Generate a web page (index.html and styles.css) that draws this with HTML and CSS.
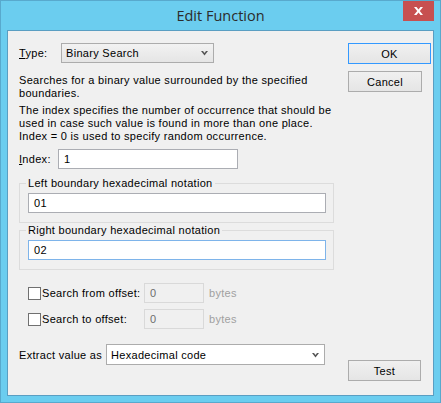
FILE: index.html
```html
<!DOCTYPE html>
<html>
<head>
<meta charset="utf-8">
<link rel="stylesheet" href="styles.css">
</head>
<body>
<div class="window">
  <div class="titlebar">
    <span class="title">Edit Function</span>
    <div class="close">
      <svg width="9" height="8" viewBox="0 0 9 8"><path d="M0 0H2.5L4.5 2.4L6.5 0H9L5.8 4L9 8H6.5L4.5 5.6L2.5 8H0L3.2 4Z" fill="#fff"/></svg>
    </div>
  </div>
  <div class="client">
    <div class="main">
      <div class="row type-row">
        <span class="lbl lbl-type"><u>T</u>ype:</span>
        <div class="select select-btn">
          <span>Binary Search</span>
          <svg class="arrow" width="7" height="5" viewBox="0 0 7 5"><path d="M0 0H2L3.5 2L5 0H7L3.5 4.5Z" fill="#555"/></svg>
        </div>
      </div>
      <p class="desc desc1">Searches for a binary value surrounded by the specified<br>boundaries.</p>
      <p class="desc desc2">The index specifies the number of occurrence that should be<br>used in case such value is found in more than one place.<br>Index = 0 is used to specify random occurrence.</p>
      <div class="row index-row">
        <span class="lbl lbl-index"><u>I</u>ndex:</span>
        <div class="field index-field">1</div>
      </div>
      <fieldset class="group group1">
        <legend>Left boundary hexadecimal notation</legend>
        <div class="field wide">01</div>
      </fieldset>
      <fieldset class="group group2">
        <legend>Right boundary hexadecimal notation</legend>
        <div class="field wide focus">02</div>
      </fieldset>
      <div class="row check-row check1">
        <span class="checkbox"></span>
        <span class="check-lbl">Search from offset:</span>
        <div class="field disabled">0</div>
        <span class="unit">bytes</span>
      </div>
      <div class="row check-row check2">
        <span class="checkbox"></span>
        <span class="check-lbl">Search to offset:</span>
        <div class="field disabled">0</div>
        <span class="unit">bytes</span>
      </div>
      <div class="row extract-row">
        <span class="lbl lbl-extract">Extract value as</span>
        <div class="select select-white">
          <span>Hexadecimal code</span>
          <svg class="arrow" width="7" height="5" viewBox="0 0 7 5"><path d="M0 0H2L3.5 2L5 0H7L3.5 4.5Z" fill="#555"/></svg>
        </div>
      </div>
    </div>
    <div class="side">
      <div class="btn ok">OK</div>
      <div class="btn cancel">Cancel</div>
      <div class="btn test">Test</div>
    </div>
  </div>
</div>
</body>
</html>
```

FILE: styles.css
```css
* { box-sizing: border-box; }
html, body { margin: 0; padding: 0; }
body {
  width: 441px;
  height: 403px;
  overflow: hidden;
  font-family: "Liberation Sans", Arial, sans-serif;
  font-size: 11px;
  letter-spacing: 0.3px;
  color: #000;
}
.window {
  position: relative;
  width: 441px;
  height: 403px;
  background: #6bcdef;
  border: 1px solid #58a9cd;
  display: flex;
  flex-direction: column;
}
.titlebar {
  height: 29px;
  display: flex;
  align-items: center;
  justify-content: center;
}
.title {
  font-family: "Open Sans", "Noto Sans", sans-serif;
  font-size: 14.5px;
  letter-spacing: 0;
  color: #2b2b2b;
}
.close {
  position: absolute;
  top: 0;
  right: 6px;
  width: 31px;
  height: 20px;
  background: #c75050;
  display: flex;
  align-items: center;
  justify-content: center;
}
.client {
  flex: 1;
  margin: 0 6px 6px 6px;
  border: 1px solid #5a9ec2;
  background: #f0f0f0;
  display: flex;
  padding: 12px 0 14px 11px;
}
.main {
  width: 315px;
  display: flex;
  flex-direction: column;
}
.side {
  margin-left: 14px;
  display: flex;
  flex-direction: column;
  align-items: flex-start;
}
.row {
  display: flex;
  align-items: center;
}
.type-row { height: 20px; }
.lbl-type { width: 42px; }
.lbl-index { width: 39px; }
.lbl-extract { width: 87px; }
.select {
  height: 20px;
  border: 1px solid #acacac;
  display: flex;
  align-items: center;
  justify-content: space-between;
  padding: 0 5px 0 4px;
}
.select-btn {
  width: 153px;
  background: linear-gradient(#f2f2f2, #e5e5e5);
}
.select-white {
  width: 219px;
  height: 21px;
  background: #fff;
}
.arrow { margin-top: 1px; }
.desc {
  margin: 0;
  line-height: 13px;
}
.desc1 { margin-top: 11px; }
.desc2 { margin-top: 4px; }
.index-row { margin-top: 6px; height: 20px; }
.field {
  height: 20px;
  border: 1px solid #abadb3;
  background: #fff;
  display: flex;
  align-items: center;
  padding-left: 5px;
}
.index-field { width: 180px; }
.group {
  margin: 0;
  border: 1px solid #dcdcdc;
  padding: 3px 7px 9px 8px;
}
.group legend {
  padding: 0 2px;
  margin-left: -2px;
  line-height: 13px;
}
.group1 { margin-top: 8px; }
.group2 { margin-top: 1px; }
.field.wide { width: 298px; }
.field.focus { border-color: #7eb4ea; }
.check-row { height: 20px; padding-left: 9px; }
.check1 { margin-top: 13px; }
.check2 { margin-top: 6px; }
.checkbox {
  width: 13px;
  height: 13px;
  border: 1px solid #707070;
  background: #fff;
  margin-right: 1px;
}
.check-lbl { width: 102px; }
.field.disabled {
  width: 60px;
  background: #f0f0f0;
  border-color: #d9d9d9;
  color: #6d6d6d;
}
.unit {
  color: #a0a0a0;
  margin-left: 5px;
}
.extract-row { margin-top: 15px; }
.btn {
  height: 21px;
  border: 1px solid #acacac;
  background: linear-gradient(#f0f0f0, #e5e5e5);
  display: flex;
  align-items: center;
  justify-content: center;
}
.ok { width: 83px; border-color: #3399ff; }
.cancel { width: 74px; margin-top: 7px; }
.test { width: 73px; margin-top: auto; }
```
